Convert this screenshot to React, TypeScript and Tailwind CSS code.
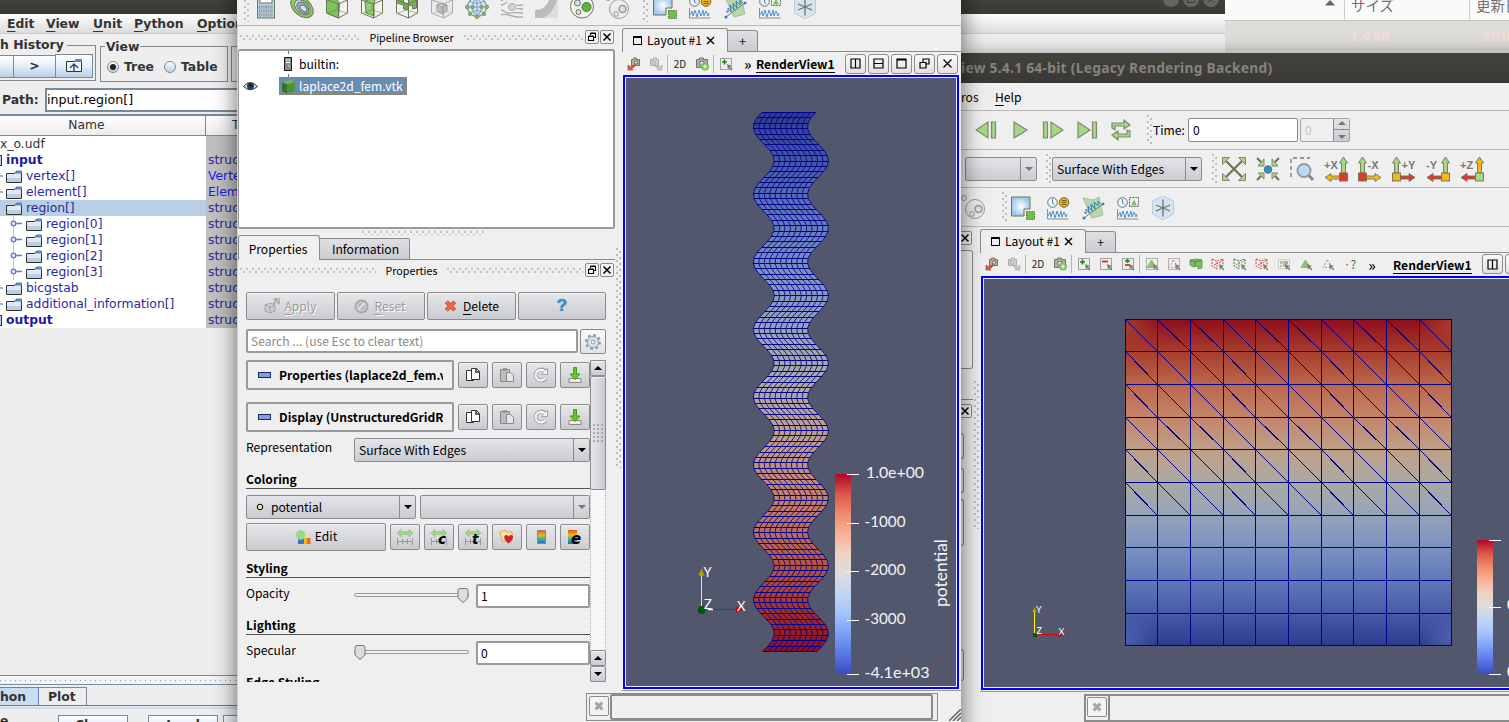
import React from "react";

type Kids = { children?: React.ReactNode };

const QT = "font-['Noto_Sans_CJK_JP',sans-serif]";
const JAVA = "font-['DejaVu_Sans',sans-serif]";
const G = "#a6d785";
const GL = "#80896f";

/* ---------- shared small pieces ---------- */

function DotsH({ className = "" }: { className?: string }) {
  return (
    <div
      className={`bg-[radial-gradient(circle_at_1px_1px,#c2c2c2_1px,transparent_1.3px),radial-gradient(circle_at_4px_4px,#c2c2c2_1px,transparent_1.3px)] bg-[length:6px_6px] ${className}`}
    />
  );
}

function DotsV({ className = "" }: { className?: string }) {
  return (
    <div
      className={`w-[5px] shrink-0 bg-[radial-gradient(circle_at_1px_1px,#bdbdbd_1px,transparent_1.3px),radial-gradient(circle_at_4px_4px,#bdbdbd_1px,transparent_1.3px)] bg-[length:6px_6px] ${className}`}
    />
  );
}

function Btn({ children, className = "" }: Kids & { className?: string }) {
  return (
    <div
      className={`flex shrink-0 items-center justify-center rounded-[2px] border border-[#8b8b8b] bg-linear-to-b from-[#e6e7ea] to-[#cacbd1] shadow-[inset_0_1px_0_#f2f2f4] ${className}`}
    >
      {children}
    </div>
  );
}

function DockBtn({ kind }: { kind: "float" | "close" }) {
  return (
    <div className="flex h-[14px] w-[14px] shrink-0 items-center justify-center rounded-[2px] border border-[#8b8b8b] bg-[#f3f3f3]">
      <svg width="10" height="10" viewBox="0 0 10 10" fill="none" stroke="#000">
        {kind === "close" ? (
          <path d="M1.5 1.5l7 7M8.500 1.500l-7 7" strokeWidth="1.5" />
        ) : (
          <path d="M3.500 3V1.500h5v4H7M1.500 4.500h5v4h-5zM1.500 4h5M3.500 1h5" strokeWidth="1.1" />
        )}
      </svg>
    </div>
  );
}

function DockTitle({ title }: { title: string }) {
  return (
    <div className="flex h-[22px] items-center pr-[1px] text-[10.700px] leading-none">
      <DotsH className="ml-[2px] h-[6px] flex-1" />
      <span className="px-[10px]">{title}</span>
      <DotsH className="mr-[2px] h-[6px] flex-1" />
      <div className="-mt-[2px] flex gap-px">
        <DockBtn kind="float" />
        <DockBtn kind="close" />
      </div>
    </div>
  );
}

function Combo({ children, className = "", off }: Kids & { className?: string; off?: boolean }) {
  return (
    <div
      className={`flex h-[24px] shrink-0 items-stretch rounded-[2px] border border-[#8b8b8b] bg-linear-to-b from-[#e4e5e9] to-[#cbccd2] text-[12.100px] leading-[21px] ${className}`}
    >
      <div className="flex-1 overflow-hidden pl-[4px] whitespace-nowrap">{children}</div>
      <div className="flex w-[16px] items-center justify-center border-l border-[#8b8b8b]">
        <svg width="8" height="4" viewBox="0 0 8 4">
          <path d="M0 0h8L4 4z" fill={off ? "#777" : "#000"} />
        </svg>
      </div>
    </div>
  );
}

/* ---------- main toolbar icons ---------- */

function Ico({ children, size = 24 }: Kids & { size?: number }) {
  return (
    <svg width={size} height={size} viewBox="0 0 24 24" fill="none" className="shrink-0">
      {children}
    </svg>
  );
}

function Cell({ children }: Kids) {
  return <div className="flex w-[35px] shrink-0 justify-center">{children}</div>;
}

const Calculator = () => (
  <Ico>
    <rect x="2.500" y="1" width="17" height="22" fill="#b9d3ea" stroke="#6e7458" />
    <rect x="5" y="3" width="12" height="5" fill="#fff" stroke="#6e7458" />
    {[11, 15, 19].map((y) =>
      [4.5, 8, 11.5, 15].map((x) => <rect key={`${x}${y}`} x={x} y={y} width="2" height="2" fill="#fff" stroke="#6e7a80" strokeWidth=".7" />)
    )}
  </Ico>
);
const Contour = () => (
  <Ico>
    <g transform="rotate(42 12 12)" stroke="#6e7458">
      <ellipse cx="12" cy="12" rx="13" ry="8.500" fill="#8cc96a" />
      <ellipse cx="12.500" cy="12" rx="9" ry="6" fill="#dfeee0" />
      <ellipse cx="13" cy="12" rx="7" ry="4.500" fill="#86add8" />
      <ellipse cx="14" cy="12" rx="4" ry="2.500" fill="#d2e4f3" />
    </g>
  </Ico>
);
const CubeIcon = ({ v }: { v: "clip" | "slice" | "thr" | "ext" }) => {
  const off = v === "ext";
  const line = off ? "#aaa" : "#6e7458";
  return (
    <Ico>
      <path d="M1.500 5l11-4 10 4v13l-9 5-12-5z" fill={off ? "#e9e9e9" : "#f1f4ee"} stroke={line} />
      {v === "clip" && <path d="M1.500 5l8-3 5 6-1 15-12-5z" fill="#7cc35c" stroke={line} />}
      {v === "slice" && <path d="M5 6l11-4-2 6v13l-8-3z" fill="#8fd06c" stroke={line} />}
      {v === "thr" && <path d="M1.500 5l7-2v5l5 1V4l8 1v8l-4 1v-4l-4 1v4l-5-1v-4l-7-2z" fill="#6fbb4d" stroke={line} />}
      {off && <path d="M7 10l5-2 5 2v6l-5 3-5-3zM12 12v7M7 10l5 2 5-2" fill="#c4c4c4" stroke="#999" />}
      <path d="M1.500 5l12 4 9-4M13.500 9v14" stroke={line} />
      <path d="M3 18l9-3 10 3M12 9v6" stroke={line} strokeWidth=".7" opacity=".7" />
    </Ico>
  );
};
const Glyph = () => (
  <Ico>
    <circle cx="12" cy="12" r="9.500" fill="#cfe4f4" stroke="#6e7458" />
    <path d="M2.500 12h19M12 2.500v19M5 6c4 3 10 3 14 0M5 18c4-3 10-3 14 0M12 2.500c-6 6-6 13 0 19M12 2.500c6 6 6 13 0 19" stroke="#6f8fae" strokeWidth=".8" />
    {[[12, 22], [2, 12], [22, 12], [5, 19], [19, 19], [7.5, 12], [16.5, 12]].map(([x, y]) => (
      <circle key={`${x}-${y}`} cx={x} cy={y} r="1.700" fill="#7cc35c" stroke="#6e7458" strokeWidth=".6" />
    ))}
  </Ico>
);
const Stream = () => (
  <Ico>
    <path d="M1 6c6-5 10 0 22-2M1 10c3 0 4-2 6-3M1 15c3 0 4 3 7 3s7-1 15 0M1 20c6-3 10 3 22 2M16 10c2 1 4 0 7 0M16 14c3-1 4 0 7 0" stroke="#aaa" strokeWidth="1.300" />
    <circle cx="12" cy="12" r="3.500" fill="#d5d5d5" stroke="#aaa" />
  </Ico>
);
const Warp = () => (
  <Ico>
    <path d="M0 15c8 0 13-4 15-14h8v22h-6L0 23z" fill="#dedede" />
    <path d="M0 15c8 0 13-4 15-14h8c-2 11-8 19-15 22H0z" fill="#bcbcbc" />
  </Ico>
);
const GroupIcon = () => (
  <Ico>
    <circle cx="12" cy="11.500" r="11.500" fill="#f3f3ee" stroke="#6e7458" />
    <circle cx="16.500" cy="12" r="4.500" fill="#5fb53c" stroke="#4a7a35" />
    <circle cx="7.500" cy="8" r="3" fill="#cfe1f1" stroke="#6e7458" />
    <circle cx="8.500" cy="17" r="2.500" fill="#cfe1f1" stroke="#6e7458" />
  </Ico>
);
const LevelIcon = () => (
  <Ico>
    <circle cx="14" cy="14" r="9.500" fill="#ececec" stroke="#999" />
    <circle cx="17.500" cy="14" r="3.500" fill="#e0e0e0" stroke="#999" strokeWidth="1.500" />
    <circle cx="11" cy="19" r="2.300" stroke="#999" />
    <circle cx="3" cy="3" r="2.500" stroke="#999" />
  </Ico>
);
const SelectBlock = () => (
  <Ico>
    <defs>
      <radialGradient id="selblk">
        <stop offset="0" stopColor="#fff" />
        <stop offset="1" stopColor="#9fc9ea" />
      </radialGradient>
    </defs>
    <path d="M.5 1h18.500v12h-6v7H.5z" fill="url(#selblk)" stroke="#6e7458" />
    <rect x="15.500" y="15.500" width="8" height="8" fill="#6cc04a" stroke="#4a7a35" strokeDasharray="1.500 1" />
  </Ico>
);
const waves = "M2 20l2-4 1 5 2-6 2 7 2-7 2 6 2-6 1 6 2-5 2 5 1-3";
const ClockPlot = ({ tri }: { tri?: boolean }) => (
  <Ico>
    <circle cx="6.500" cy="6.500" r="4.800" fill="#eef6fc" stroke="#6e7458" />
    <path d="M6.500 3v4l2 1.500" stroke="#3b7fb8" />
    {tri ? (
      <>
        <rect x="13.500" y="1.500" width="9" height="9" stroke="#666" strokeDasharray="2 1" />
        <path d="M18 3.500l3 6h-6z" fill="#7cc35c" />
      </>
    ) : (
      <>
        <circle cx="18" cy="6.500" r="4.800" fill="#f2b81a" stroke="#6e6438" />
        <path d="M15.500 4.500h5M15.500 6.500h5M15.500 8.500h5" stroke="#7a5a10" />
      </>
    )}
    <path d="M1.500 13v10h21" stroke="#8a8f80" />
    <path d={waves} stroke="#4b93d1" />
  </Ico>
);
const LinePlot = () => (
  <Ico>
    <path d="M2 2l10 2 6-3 4 18-11 3z" fill="#b7d8a8" stroke="#a6bf98" />
    <path d="M3 16l2 2 0-5 3 4-1-7 4 5-1-7 4 5-1-7 4 4 0-5 2 3" stroke="#2f7cc4" />
    <path d="M3 22L22 8" stroke="#777b60" />
    <circle cx="3" cy="22" r="1.500" fill="#2f7cc4" />
    <circle cx="22" cy="8" r="1.500" fill="#2f7cc4" />
  </Ico>
);
const ProbeCube = () => (
  <Ico>
    <path d="M12 0l10.500 5v13L12 24 1.500 18V5z" fill="#d6e4f0" stroke="#bccbd8" />
    <path d="M12 3.500v17M5 9l14 6M19 9L5 15" stroke="#6d7466" strokeWidth="1.300" />
  </Ico>
);

function SampleTools() {
  return (
    <>
      <Cell><SelectBlock /></Cell>
      <Cell><ClockPlot /></Cell>
      <Cell><LinePlot /></Cell>
      <Cell><ClockPlot tri /></Cell>
      <Cell><ProbeCube /></Cell>
    </>
  );
}

/* ---------- view toolbar ---------- */

function Mini({ children }: Kids) {
  return (
    <svg width="14" height="14" viewBox="0 0 14 14" fill="none" className="shrink-0">
      {children}
    </svg>
  );
}

const CameraUndo = ({ off }: { off?: boolean }) => (
  <Mini>
    <g transform={off ? "translate(14 0) scale(-1 1)" : undefined}>
      <path d="M4.500 2.500h2V1h3v1.500h3v6h-8z" fill={off ? "#d0d0d0" : "#b5b09a"} stroke={off ? "#aaa" : "#77755f"} />
      <circle cx="9" cy="5.500" r="1.700" fill="#ddd" stroke={off ? "#aaa" : "#666"} />
      <path d="M1 8v5h5l-1.500-1.500C7 11 8 9.500 8 7.500 6.500 9 5 9.300 3 9.500z" fill={off ? "#c9c9c9" : "#e05a48"} stroke={off ? "#aaa" : "#b0402f"} strokeWidth=".7" />
    </g>
  </Mini>
);
const CameraLink = () => (
  <Mini>
    <path d="M1.500 2.500h3V1h4v1.500h4v8h-11z" fill="#b4b39c" stroke="#77755f" />
    <circle cx="7" cy="6.500" r="2.500" fill="#dde" stroke="#666" />
    <circle cx="10" cy="9.500" r="4" fill="#7cc35c" />
    <path d="M8 9.500h4M10 7.500v4" stroke="#dff2d6" strokeWidth="1.500" />
  </Mini>
);
const Arrow = () => <path d="M8 7l5 2-2 1 2.500 2.500-1 1L10 11l-1 2z" fill="#7c8068" />;
const Pick = ({ op }: { op: "plus" | "minus" | "both" }) => (
  <Mini>
    <rect x="1.500" y="1.500" width="11" height="11" stroke="#555" strokeDasharray="1 1" />
    {op !== "minus" && <path d={op === "both" ? "M4 4h5M6.500 2v4" : "M3 5h5M5.500 2.500v5"} stroke="#178a17" strokeWidth="1.700" />}
    {op !== "plus" && <path d={op === "both" ? "M4 8h5" : "M3 4.500h6"} stroke="#e22" strokeWidth="1.800" />}
    <Arrow />
  </Mini>
);
const Tri = ({ box, dots }: { box?: boolean; dots?: boolean }) => (
  <Mini>
    {box && <rect x="1.500" y="1.500" width="11" height="11" stroke="#777" strokeDasharray="1 1" />}
    <path d="M6.500 3l4.500 7.500H2z" fill={dots ? "none" : "#8cc96a"} stroke={dots ? "#e55" : "#8cb974"} strokeDasharray={dots ? "1.500 2" : undefined} />
    <Arrow />
  </Mini>
);
const Frustum = ({ red, fill }: { red?: boolean; fill?: boolean }) => (
  <Mini>
    {fill ? (
      <>
        <path d="M1 3l6-1 6 1v8l-4 1V9l-5 1-3-2z" fill="#7fbf62" stroke="#5d8a4a" strokeWidth=".8" />
        <path d="M1 3l5 2 7-2M6 5v4" stroke="#4c7a44" strokeWidth=".8" />
      </>
    ) : (
      <>
        <path d="M1 2l5 2 6-2v6M1 2v7l5 3V4" stroke={red ? "#d44" : "#4c7a44"} strokeDasharray="2 1" />
        <path d="M3 8l4-2M12 3L8 6" stroke={red ? "#b43" : "#6a9a5a"} strokeDasharray="2 1" />
        <Arrow />
      </>
    )}
  </Mini>
);
const BlockPick = () => (
  <Mini>
    <rect x="1.500" y="2.500" width="11" height="9" stroke="#aaa" strokeDasharray="1 1" />
    <path d="M3 4h3v3H3zM6 7h3v3H6zM3 8h2v2H3z" fill="#a9c69a" />
    <path d="M6 4h5v3H7z" fill="#aaa" />
    <Arrow />
  </Mini>
);

function Sep() {
  return <div className="h-[18px] w-px shrink-0 bg-[#b4b4b4]" />;
}

function Slot({ children }: Kids) {
  return <div className="flex w-[22px] shrink-0 items-center justify-center">{children}</div>;
}

const TwoD = () => <span className="text-[10px] leading-none text-[#222]">2D</span>;

function ViewBtn({ d }: { d: string }) {
  return (
    <div className="flex h-[20px] w-[21px] shrink-0 items-center justify-center rounded-[3px] border border-[#8b8b8b] bg-linear-to-b from-[#fafafa] to-[#e2e2e4]">
      <svg width="11" height="11" viewBox="0 0 11 11" fill="none" stroke="#000" strokeWidth="1.200">
        <path d={d} />
      </svg>
    </div>
  );
}

function LayoutTabs() {
  return (
    <div className="flex h-[24px] items-end">
      <div className="flex h-[24px] w-[106px] shrink-0 items-center rounded-t-[3px] border border-b-0 border-[#8b8b8b] bg-[#efefef] pl-[10px] text-[12.100px] leading-none">
        <div className="mr-[5px] h-[9px] w-[9px] border border-t-2 border-black" />
        <span className="whitespace-nowrap">Layout #1</span>
        <svg width="9" height="9" viewBox="0 0 9 9" className="ml-[4px]" stroke="#000" strokeWidth="1.400">
          <path d="M1 1l7 7M8 1L1 8" />
        </svg>
      </div>
      <div className="flex h-[22px] w-[30px] shrink-0 items-center justify-center rounded-tr-[3px] border border-l-0 border-[#8b8b8b] bg-linear-to-b from-[#dfe0e4] to-[#cbccd2] text-[12px] leading-none">+</div>
      <div className="h-px flex-1 bg-[#8b8b8b]" />
    </div>
  );
}

/* ---------- rendered scenes ---------- */

const SURF = ["#8f0c1c", "#a83c2e", "#bb664c", "#c4846a", "#bf9f88", "#abaaa4", "#95a3b8", "#7b93c0", "#6079b9", "#475ba9", "#2e3b8e"];

function Stops({ colors }: { colors: string[] }) {
  return (
    <>
      {colors.map((c, i) => (
        <stop key={i} offset={i / (colors.length - 1)} stopColor={c} />
      ))}
    </>
  );
}

const BAR = ["#b40426", "#d95847", "#f08a6c", "#f7b396", "#ecd3c5", "#dddcdc", "#c0d4f5", "#a3c2fe", "#7b9ff9", "#5977e3", "#3b4cc0"];

function waveMesh() {
  const rows = 100;
  const y0 = 112.500;
  const dy = 5.390;
  const at = (r: number) => 763.8 - 10.500 * Math.sin((2 * Math.PI * (r + 0.450)) / 12.530);
  const w = 54.200;
  let across = "";
  let down = "";
  let left = "";
  let right = "";
  for (let r = 0; r <= rows; r++) {
    const y = y0 + r * dy;
    const x = at(r);
    across += `M${x.toFixed(1)} ${Math.floor(y) + 0.5}h${w}`;
    left += `${r ? "L" : "M"}${x.toFixed(1)} ${y.toFixed(1)}`;
    right = `L${(x + w).toFixed(1)} ${y.toFixed(1)}` + right;
  }
  for (let c = 0; c <= 10; c++) {
    for (let r = 0; r <= rows; r++) {
      down += `${r ? "L" : "M"}${(at(r) + (w * c) / 10).toFixed(1)} ${(y0 + r * dy).toFixed(1)}`;
    }
  }
  return { across, down, outline: left + right + "Z" };
}

const MESH = waveMesh();

function WaveScene() {
  const ticks: [number, string, number][] = [
    [474, "1.0e+00", 58],
    [523, "-1000", 41],
    [571, "-2000", 41],
    [620, "-3000", 41],
    [674, "-4.1e+03", 65],
  ];
  return (
    <svg width="330" height="608" viewBox="626 78 330 608" className="block font-['Lato',sans-serif]">
      <defs>
        <linearGradient id="wave" gradientUnits="userSpaceOnUse" x1="0" x2="0" y1="651" y2="112">
          <Stops colors={SURF} />
        </linearGradient>
        <linearGradient id="bar" x1="0" x2="0" y1="0" y2="1">
          <Stops colors={BAR} />
        </linearGradient>
      </defs>
      <path d={MESH.outline} fill="url(#wave)" />
      <path d={MESH.across} stroke="#00008b" fill="none" shapeRendering="crispEdges" />
      <path d={MESH.down} stroke="#00008b" strokeWidth=".85" fill="none" />
      <rect x="835" y="474" width="16" height="200" fill="url(#bar)" />
      {ticks.map(([y, label, w]) => (
        <g key={y}>
          <path d={`M847 ${y + 0.5}h12`} stroke="#fff" shapeRendering="crispEdges" />
          <text x={label === "1.0e+00" ? 866 : 864.500} y={y + 4} fontSize="16" fill="#f4f4f4" textLength={w} lengthAdjust="spacingAndGlyphs">
            {label}
          </text>
        </g>
      ))}
      <text transform="translate(947 607) rotate(-90)" fontSize="16.500" fill="#f4f4f4" textLength="68" lengthAdjust="spacingAndGlyphs">
        potential
      </text>
      <path d="M701.500 608V574" stroke="#ff0" />
      <path d="M701.500 568.500l3 7h-6z" fill="#b5a800" />
      <path d="M708 609.500h5" stroke="#fff" strokeWidth="1.500" />
      <path d="M713 609.500h24" stroke="#e00000" />
      <path d="M744 609.500l-8-3v6z" fill="#d00000" />
      <circle cx="701.700" cy="610" r="4" fill="#005a00" />
      <g fontSize="13" fill="#fff">
        <text x="703.500" y="576.500">Y</text>
        <text x="737" y="610.500">X</text>
        <text x="704" y="609">Z</text>
      </g>
    </svg>
  );
}

const GRID_AT = [0, 32, 65, 98, 130, 163, 196, 228, 261, 294, 326];

function gridMesh() {
  let d = "";
  let diag = "";
  GRID_AT.forEach((p) => {
    d += `M${p + 0.5} 0v327M0 ${p + 0.5}h327`;
  });
  for (let r = 0; r < 6; r++) {
    for (let c = 0; c < 10; c++) diag += `M${GRID_AT[c]} ${GRID_AT[r]}L${GRID_AT[c + 1]} ${GRID_AT[r + 1]}`;
  }
  return { d, diag };
}

const GRID = gridMesh();

function SquareScene() {
  return (
    <svg width="525" height="408" viewBox="984 279 525 408" className="block shrink-0 font-['Lato',sans-serif]">
      <defs>
        <linearGradient id="sq" x1="0" x2="0" y1="0" y2="1">
          <Stops colors={SURF} />
        </linearGradient>
        <radialGradient id="hot">
          <stop offset="0" stopColor="#a83c2e" />
          <stop offset="1" stopColor="#a83c2e" stopOpacity="0" />
        </radialGradient>
        <radialGradient id="cold">
          <stop offset="0" stopColor="#4a60ae" />
          <stop offset="1" stopColor="#4a60ae" stopOpacity="0" />
        </radialGradient>
        <clipPath id="sqclip">
          <rect width="326" height="326" />
        </clipPath>
      </defs>
      <g transform="translate(1125 319)">
        <rect width="326" height="326" fill="url(#sq)" />
        <g clipPath="url(#sqclip)">
          <circle cx="0" cy="8" r="34" fill="url(#hot)" />
          <circle cx="326" cy="8" r="34" fill="url(#hot)" />
          <circle cx="0" cy="318" r="34" fill="url(#cold)" />
          <circle cx="326" cy="318" r="34" fill="url(#cold)" />
        </g>
        <path d={GRID.d} stroke="#00008b" fill="none" shapeRendering="crispEdges" />
        <path d={GRID.diag} stroke="#00008b" fill="none" shapeRendering="crispEdges" />
      </g>
      <rect x="1477" y="540" width="16" height="134" fill="url(#bar)" />
      <path d="M1489 540.500h12M1489 607.500h12M1489 674.500h12" stroke="#fff" shapeRendering="crispEdges" />
      <text x="1507" y="610" fontSize="15.500" fill="#fff">0.5</text>
      <text x="1507" y="677" fontSize="15.500" fill="#fff">0.0</text>
      <path d="M1034.500 634V612" stroke="#ff0" />
      <path d="M1034.500 607l2 5h-4z" fill="#b5a800" />
      <path d="M1036 634.500h23" stroke="#e00000" />
      <path d="M1063 635l-5-2v4z" fill="#c00000" />
      <rect x="1033" y="633" width="4" height="4" fill="#005a00" />
      <g fontSize="9" fill="#fff">
        <text x="1036" y="613">Y</text>
        <text x="1058.500" y="635">X</text>
        <text x="1036.500" y="634">Z</text>
      </g>
    </svg>
  );
}

/* ---------- Java window ---------- */

function Mn({ t, className = "" }: { t: string; className?: string }) {
  return (
    <span className={`shrink-0 ${className}`}>
      <span className="underline underline-offset-[3px]">{t[0]}</span>
      {t.slice(1)}
    </span>
  );
}

function Folder() {
  return (
    <svg width="16" height="13" viewBox="0 0 16 13" className="shrink-0">
      <path d="M.5 3.500h8l1.500-2h5.500v11H.5z" fill="#dfeaf5" stroke="#333" />
      <path d="M1 8h14v4H1z" fill="#b8cfe5" />
      <path d="M9 3.500l1.500-3H16v3z" fill="#6382bf" />
    </svg>
  );
}

function Knob() {
  return (
    <svg width="12" height="16" viewBox="0 0 12 16" className="shrink-0" fill="none" stroke="#6382bf">
      <path d="M3.500 0v5.500M3.500 10v6" stroke="#b8cfe5" />
      <circle cx="3.500" cy="7.500" r="2.200" strokeWidth="1.500" />
      <path d="M5.500 7.500H12" strokeWidth="1.500" />
    </svg>
  );
}

const TREE: { t: string; lv: number; ty?: string; sel?: boolean }[] = [
  { t: "x_o.udf", lv: 0 },
  { t: "input", lv: 1, ty: "struct" },
  { t: "vertex[]", lv: 2, ty: "Vertex" },
  { t: "element[]", lv: 2, ty: "Element" },
  { t: "region[]", lv: 2, ty: "struct", sel: true },
  { t: "region[0]", lv: 3, ty: "struct" },
  { t: "region[1]", lv: 3, ty: "struct" },
  { t: "region[2]", lv: 3, ty: "struct" },
  { t: "region[3]", lv: 3, ty: "struct" },
  { t: "bicgstab", lv: 2, ty: "struct" },
  { t: "additional_information[]", lv: 2, ty: "struct" },
  { t: "output", lv: 1, ty: "struct" },
];

function TreeRow({ n }: { n: (typeof TREE)[number] }) {
  return (
    <div className="flex h-[16px] shrink-0 text-[12.350px] leading-[16px] text-[#2a2a9e]">
      <div className={`flex w-[206px] items-center overflow-hidden whitespace-nowrap ${n.sel ? "bg-[#b8cfe5]" : "bg-white"}`}>
        {n.lv === 0 && <span className="text-[#333]">{n.t}</span>}
        {n.lv === 1 && (
          <>
            <div className="mr-[4px] h-[11px] w-[2px] border-y border-r border-[#333] bg-[#b8cfe5]" />
            <span className="font-bold text-[#1c1ca0]">{n.t}</span>
          </>
        )}
        {n.lv === 2 && (
          <>
            <div className={`mr-[3px] h-[2px] w-[3px] ${n.sel ? "" : "bg-[#9db6dc]"}`} />
            <Folder />
            <span className="ml-[4px]">{n.t}</span>
          </>
        )}
        {n.lv === 3 && (
          <>
            <div className="mr-[3px] ml-[10px]">
              <Knob />
            </div>
            <div className="ml-px flex items-center">
              <Folder />
              <span className="ml-[4px]">{n.t}</span>
            </div>
          </>
        )}
      </div>
      <div className={`w-[32px] overflow-hidden bg-[#c0c0c0] pl-[2px] ${n.ty && n.ty !== "struct" ? "text-[#1a1aff]" : ""}`}>{n.ty}</div>
    </div>
  );
}

function JBtn({ children, className = "" }: Kids & { className?: string }) {
  return (
    <div className={`flex items-center justify-center border border-[#7a8a99] bg-linear-to-b from-white via-[#e4eef8] to-[#b8cfe5] ${className}`}>{children}</div>
  );
}

function Radio({ on, label }: { on?: boolean; label: string }) {
  return (
    <div className="flex items-center gap-[5px]">
      <div className="flex h-[12px] w-[12px] items-center justify-center rounded-full border border-[#7a8a99] bg-linear-to-b from-white to-[#b8cfe5]">
        {on && <div className="h-[6px] w-[6px] rounded-full bg-[#222]" />}
      </div>
      <span>{label}</span>
    </div>
  );
}

function JavaWindow() {
  return (
    <div className={`absolute top-0 left-0 flex h-[722px] w-[1225px] flex-col bg-[#eee] text-[12.400px] font-bold text-[#333] ${JAVA}`}>
      <div className="flex h-[14px] shrink-0 items-start justify-end bg-linear-to-b from-[#403f3a] to-[#3b3a36] pr-[6px]">
        <svg width="56" height="8" viewBox="0 0 56 8">
          <g fill="#66655f">
            <circle cx="8" cy="-1" r="8" />
            <circle cx="28" cy="-1" r="8" />
            <circle cx="48" cy="-1" r="8" />
          </g>
          <path d="M24.500 0v2.500h7V0M45 2.500L48-.5l3 3" stroke="#3a3935" fill="none" />
        </svg>
      </div>
      <div className="flex h-[20px] shrink-0 items-center border-b border-[#ccc] bg-linear-to-b from-white to-[#dcdcdc] pl-[7px] leading-[18px]">
        <Mn t="Edit" className="w-[39px]" />
        <Mn t="View" className="w-[47px]" />
        <Mn t="Unit" className="w-[41px]" />
        <Mn t="Python" className="w-[63px]" />
        <Mn t="Options" />
      </div>
      <div className="flex h-[52px] w-[260px] shrink-0 items-start overflow-hidden pt-[4px]">
        <div className="flex w-[96px] shrink-0 flex-col">
          <div className="flex h-[14px] items-center leading-none">
            <span className="whitespace-nowrap">h History</span>
            <div className="ml-[3px] h-px flex-1 bg-[#888]" />
          </div>
          <div className="-mt-[7px] flex h-[36px] items-start border-r border-b border-[#888] pt-[9px]">
            <JBtn className="mt-px h-[23px] w-[14px] border-l-0" />
            <JBtn className="mt-px -ml-px h-[23px] w-[43px]">&gt;</JBtn>
            <JBtn className="-ml-px h-[24px] w-[38px]">
              <svg width="16" height="14" viewBox="0 0 16 14" fill="none">
                <path d="M.5 2.500h8l1.500-2h5.500v12H.5z" fill="#eef4fa" stroke="#333" />
                <path d="M9 3l1.500-3H16v3z" fill="#6382bf" />
                <path d="M4 9l4-4 4 4M8 5v8" stroke="#2a4a7a" strokeWidth="1.500" />
              </svg>
            </JBtn>
          </div>
        </div>
        <fieldset className="ml-[4px] h-[44px] w-[128px] shrink-0 border border-[#888] pl-[6px]">
          <legend className="ml-[-2px] px-px leading-[17px]">View</legend>
          <div className="flex gap-[10px] pt-[4px] leading-[16px]">
            <Radio on label="Tree" />
            <Radio label="Table" />
          </div>
        </fieldset>
        <div className="mt-[8px] ml-[3px] h-[36px] w-[30px] shrink-0 border border-[#888]" />
      </div>
      <div className="flex h-[28px] shrink-0 items-center pl-[2px]">
        <span className="w-[43px]">Path:</span>
        <div className="h-[24px] w-[220px] border-2 border-[#7a8a99] bg-white text-[12.600px] leading-[19px] font-normal text-black">input.region[]</div>
      </div>
      <div className="flex h-[22px] w-[238px] shrink-0 overflow-hidden border-t-2 border-b border-[#7a8a99] bg-linear-to-b from-white to-[#ececec] text-[12.300px] leading-[19px] font-normal">
        <div className="w-[206px] shrink-0 border-r border-[#7a8a99] pr-[32px] text-center">Name</div>
        <div className="shrink-0 pl-[26px]">Type</div>
      </div>
      <div className="-mt-px flex flex-col pt-px font-normal">
        {TREE.map((n) => (
          <TreeRow key={n.t} n={n} />
        ))}
      </div>
      <div className="flex-1" />
      <div className="flex h-[10px] w-[260px] shrink-0 flex-col justify-center border-y border-[#7a8a99] bg-[#f4f4f4]">
        <div className="h-px bg-[repeating-linear-gradient(90deg,#8a9aa8_0_1px,transparent_1px_5px)]" />
      </div>
      <div className="mt-[2px] flex h-[19px] w-[260px] shrink-0 items-stretch border-b border-[#5577bb] leading-[17px]">
        <div className="w-[39px] border-t border-r border-[#6382bf] bg-[#c8ddf2]">hon</div>
        <div className="w-[48px] border-t border-r border-[#7a8a99] pl-[9px]">Plot</div>
      </div>
      <div className="mt-px h-[2px] w-[260px] shrink-0 bg-[#c8ddf2]" />
      <div className="mt-[6px] flex h-[7px] w-[260px] shrink-0 overflow-hidden leading-[18px]">
        <span className="w-[58px] shrink-0 -translate-y-[3px]">e</span>
        <JBtn className="h-[20px] w-[70px] shrink-0">Clear</JBtn>
        <JBtn className="ml-[20px] h-[20px] w-[70px] shrink-0">Load</JBtn>
        <JBtn className="ml-[5px] h-[20px] w-[70px] shrink-0" />
      </div>
    </div>
  );
}

/* ---------- file manager ---------- */

function FileManager() {
  return (
    <div className="absolute top-0 left-[1225px] flex h-[53px] w-[284px] flex-col overflow-hidden bg-[#e6e4e1] font-['Noto_Sans_CJK_JP',sans-serif] text-[14.500px]">
      <div className="flex h-[21px] shrink-0 items-stretch border-b border-[#c9c7c3] bg-[#fafafa] leading-[9px] text-[#707070]">
        <div className="flex w-[120px] shrink-0 justify-end border-r border-[#d0cfcc] pr-[9px]">
          <svg width="10" height="6" viewBox="0 0 10 6">
            <path d="M5 0l5 5.500H0z" fill="#666" />
          </svg>
        </div>
        <div className="w-[125px] shrink-0 border-r border-[#d0cfcc] pl-[6px]">サイズ</div>
        <div className="shrink-0 pl-[6px] whitespace-nowrap">更新日</div>
      </div>
      <div className="flex h-[29px] shrink-0 border-b border-[#d2d0cd] bg-[#dedcd9] text-[13.300px] leading-[30px] font-medium text-[#f5dfd6]">
        <div className="w-[126px] shrink-0" />
        <div className="w-[133px] shrink-0">1.4 kB</div>
        <div>2018</div>
      </div>
    </div>
  );
}

/* ---------- right ParaView window ---------- */

function Play({ v }: { v: "prev" | "play" | "next" | "last" | "loop" }) {
  const d = {
    prev: "M13 3v16L1 11zM16.500 3h4v16h-4z",
    play: "M5 3v16l13-8z",
    next: "M1.500 3h4v16h-4zM9 3v16l12-8z",
    last: "M2 3v16l12-8zM16.500 3h4v16h-4z",
    loop: "M2 9V4h12V1l6 5-6 4V7H5v4zM20 12v6H8v3l-6-5 6-4v3h9v-4z",
  }[v];
  return (
    <svg width="22" height="22" viewBox="0 0 22 22" className="shrink-0">
      <path d={d} fill={G} stroke={GL} strokeWidth="1.200" />
    </svg>
  );
}

function AxisIcon({ t, flip, up, side, box }: { t: string; flip?: boolean; up: string; side: string; box: string }) {
  return (
    <svg width="26" height="26" viewBox="0 0 26 26" className="shrink-0">
      <g transform={flip ? "translate(26 0) scale(-1 1)" : undefined} stroke="#6e7458" strokeWidth=".9">
        <path d="M3.500 17V7H1.500l4-6 4 6H7.500v10z" fill={up} />
        <path d="M9 20h9v-2.500l6 4-6 4V23H9z" fill={side} />
        <rect x="1.500" y="17" width="8" height="8" fill={box} />
      </g>
      <text x={flip ? 1 : 10.500} y="12.500" fontSize="11" fontWeight="bold" fill="#777" fontFamily="Liberation Sans">
        {t}
      </text>
    </svg>
  );
}

const ResetCam = () => (
  <Ico>
    <path d="M4 4l16 16M20 4L4 20" stroke="#6e7458" strokeWidth="2.200" />
    {["M.5.5h7l-7 7z", "M23.500.5h-7l7 7z", "M.5 23.500h7l-7-7z", "M23.500 23.500h-7l7-7z"].map((d) => (
      <path key={d} d={d} fill={G} stroke={GL} />
    ))}
  </Ico>
);
const ZoomData = () => (
  <Ico>
    <path d="M1 1l5 5M23 1l-5 5M1 23l5-5M23 23l-5-5" stroke="#6e7458" strokeWidth="2" />
    {["M8 2v7H2z", "M16 2v7h6z", "M8 22v-6H2z", "M16 22v-6h6z"].map((d) => (
      <path key={d} d={d} fill={G} stroke={GL} />
    ))}
    <circle cx="12" cy="12.500" r="3.800" fill="#2f8fd6" stroke="#55748c" />
  </Ico>
);
const ZoomBox = () => (
  <Ico>
    <path d="M1 20V1h19" stroke="#777" strokeDasharray="4 3" strokeWidth="1.300" />
    <circle cx="14" cy="13.500" r="6.500" fill="#b9dcf5" stroke="#999" strokeWidth="2" />
    <path d="M18.500 18l4.500 5" stroke="#8a8a8a" strokeWidth="3" />
  </Ico>
);

function ParaRight() {
  return (
    <div className={`absolute top-[53px] left-[961px] flex h-[669px] w-[548px] flex-col overflow-hidden bg-[#efefef] text-[12.100px] text-black ${QT}`}>
      <div className="h-[30px] shrink-0 bg-linear-to-b from-[#42413c] to-[#3a3935] font-['Noto_Sans',sans-serif] text-[13.800px] leading-[30px] font-bold tracking-[0.27px] whitespace-nowrap text-[#85837b]">
        iew 5.4.1 64-bit (Legacy Rendering Backend)
      </div>
      <div className="flex h-[28px] shrink-0 items-center border-b border-[#b9b9b9] pt-[2px] leading-none">
        <span className="w-[34px]">ros</span>
        <Mn t="Help" />
      </div>
      <div className="flex h-[39px] shrink-0 items-center border-b border-[#b9b9b9]">
        <div className="ml-[14px] flex w-[173px] shrink-0 items-center">
          <div className="w-[34px]"><Play v="prev" /></div>
          <div className="w-[33px]"><Play v="play" /></div>
          <div className="w-[34px]"><Play v="next" /></div>
          <div className="w-[34px]"><Play v="last" /></div>
          <Play v="loop" />
        </div>
        <DotsV className="-ml-px h-[30px]" />
        <span className="ml-px w-[35px] leading-none">Time:</span>
        <div className="h-[24px] w-[110px] rounded-[2px] border border-[#8b8b8b] bg-white pl-[4px] leading-[21px]">0</div>
        <div className="ml-[2px] flex h-[24px] w-[50px] rounded-[2px] border border-[#a5a5a5] text-[#c4c4c4]">
          <span className="flex-1 pl-[4px] leading-[22px]">0</span>
          <div className="flex w-[16px] flex-col items-center justify-around border-l border-[#8b8b8b] bg-linear-to-b from-[#e4e5e9] to-[#cbccd2]">
            <svg width="8" height="4"><path d="M0 4h8L4 0z" fill="#777" /></svg>
            <div className="h-px w-full bg-[#8b8b8b]" />
            <svg width="8" height="4"><path d="M0 0h8L4 4z" fill="#777" /></svg>
          </div>
        </div>
      </div>
      <div className="flex h-[38px] shrink-0 items-center border-b border-[#b9b9b9]">
        <Combo className="ml-[4px] w-[72px]" off />
        <DotsV className="ml-[9px] h-[30px]" />
        <Combo className="ml-px w-[150px]">Surface With Edges</Combo>
        <DotsV className="ml-[10px] h-[30px]" />
        <div className="ml-[5px] flex gap-[10px]">
          <ResetCam />
          <ZoomData />
          <ZoomBox />
        </div>
        <div className="ml-[9px] flex gap-[8px]">
          <AxisIcon t="+X" flip up={G} side="#f2b81a" box="#df3a2a" />
          <AxisIcon t="-X" up={G} side="#f2b81a" box="#df3a2a" />
          <AxisIcon t="+Y" up={G} side="#df3a2a" box="#f2b81a" />
          <AxisIcon t="-Y" flip up={G} side="#df3a2a" box="#f2b81a" />
          <AxisIcon t="+Z" flip up="#f2b81a" side="#df3a2a" box={G} />
        </div>
      </div>
      <div className="flex h-[39px] shrink-0 items-center border-b border-[#b9b9b9]">
        <div className="w-[41px]"><LevelIcon /></div>
        <DotsV className="h-[30px]" />
        <div className="-ml-[2px] flex pt-px"><SampleTools /></div>
      </div>
      <div className="flex min-h-0 flex-1">
        <div className="flex w-[12px] shrink-0 flex-col overflow-hidden pt-[4px]">
          <div className="flex h-[16px] justify-end pr-[1px]"><DockBtn kind="close" /></div>
          <div className="mt-[3px] h-[119px] shrink-0 rounded-r-[3px] border border-l-0 border-[#8b8b8b] bg-[#f7f7f7]" />
          <div className="mt-[30px] h-px shrink-0 bg-[#8b8b8b]" />
          <div className="mt-[4px] flex h-[14px] shrink-0 justify-end pr-[1px]"><DockBtn kind="close" /></div>
          <div className="mt-[15px] h-[26px] w-[3px] shrink-0 rounded-r-[3px] border border-l-0 border-[#8b8b8b]" />
          <div className="mt-[9px] h-[25px] w-[3px] shrink-0 rounded-r-[3px] border border-l-0 border-[#8b8b8b]" />
          <div className="mt-[6px] h-[47px] w-[3px] shrink-0 rounded-r-[3px] border border-l-0 border-[#8b8b8b]" />
          <div className="mt-[103px] h-[32px] w-[3px] shrink-0 rounded-r-[3px] border border-l-0 border-[#8b8b8b]" />
        </div>
        <DotsV className="mt-[154px] ml-[1px] h-[148px]" />
        <div className="ml-px flex w-[530px] shrink-0 flex-col pt-[2px]">
          <LayoutTabs />
          <div className="flex h-[22px] shrink-0 items-center pl-[1px]">
            <Slot><CameraUndo /></Slot>
            <Slot><CameraUndo off /></Slot>
            <Sep />
            <div className="ml-px flex"><Slot><TwoD /></Slot><Slot><CameraLink /></Slot></div>
            <Sep />
            <div className="ml-px flex"><Slot><Pick op="plus" /></Slot><Slot><Pick op="minus" /></Slot><Slot><Pick op="both" /></Slot></div>
            <Sep />
            <div className="ml-px flex">
              <Slot><Tri box /></Slot>
              <Slot><Tri box dots /></Slot>
              <Slot><Frustum fill /></Slot>
              <Slot><Frustum red /></Slot>
              <Slot><Frustum /></Slot>
              <Slot><Frustum red /></Slot>
              <Slot><BlockPick /></Slot>
              <Slot><Tri /></Slot>
              <Slot><Tri dots /></Slot>
              <Slot><span className="text-[12px] leading-none text-[#557045]"><span className="text-[#d33]">·</span>?</span></Slot>
              <Slot><span className="text-[15px] leading-none font-medium">»</span></Slot>
            </div>
            <span className="ml-[10px] w-[89px] shrink-0 leading-[15px] font-bold"><span className="border-b border-black">RenderView1</span></span>
            <div className="flex gap-[2px]">
              <ViewBtn d="M1 1h9v9H1zM5.500 1v9" />
              <ViewBtn d="M1 1h9v9H1zM1 5.500h9" />
            </div>
          </div>
          <div className="mt-px ml-px h-[414px] shrink-0 border-2 border-r-0 border-[#0000ff]">
            <div className="h-[410px] border border-r-0 border-[#e8e8ff] bg-[#52576e]">
              <SquareScene />
            </div>
          </div>
          <div className="mt-px h-px shrink-0 bg-[#9a9a9a]" />
          <div className="mt-[2px] ml-[104px] flex h-[28px] shrink-0 border-2 border-r-0 border-[#8b8b8b]">
            <StopBtn />
            <div className="flex-1 border-l-2 border-[#8b8b8b]" />
          </div>
        </div>
      </div>
    </div>
  );
}

function StopBtn() {
  return (
    <div className="m-px flex h-[20px] w-[20px] items-center justify-center rounded-[2px] border border-[#8b8b8b] bg-[#f3f3f3]">
      <svg width="10" height="10" viewBox="0 0 12 12" stroke="#a5a5a5" strokeWidth="3.600">
        <path d="M2 2l8 8M10 2l-8 8" />
      </svg>
    </div>
  );
}

/* ---------- front ParaView window ---------- */

const PageIco = ({ v }: { v: "copy" | "paste" | "reload" | "save" }) => (
  <svg width="18" height="18" viewBox="0 0 18 18" fill="none">
    {v === "copy" && (
      <>
        <path d="M2.500 4.500h5l2 2v8h-7z" fill="#fff" stroke="#333" />
        <path d="M7.500 2.500h5l3 3v8h-8z" fill="#fff" stroke="#333" />
        <path d="M12 2.500v3.500h3.500" stroke="#333" strokeWidth="1.500" />
      </>
    )}
    {v === "paste" && (
      <>
        <path d="M2.500 3.500h9v12h-9z" fill="#bdbdbd" stroke="#888" />
        <path d="M5 2h4v3H5z" fill="#999" />
        <path d="M8.500 6.500h4l3 3v6h-7z" fill="#e8e8e8" stroke="#888" />
      </>
    )}
    {v === "reload" && (
      <>
        <path d="M13.500 12.500A5.500 5.500 0 1 1 13 5" stroke="#a2a2a2" strokeWidth="4" />
        <path d="M15.500 2v6.500H9.500z" fill="#f6f6f6" stroke="#a2a2a2" />
        <path d="M13.300 12.200A5.300 5.300 0 1 1 12.800 5.500" stroke="#f6f6f6" strokeWidth="2.200" />
      </>
    )}
    {v === "save" && (
      <>
        <path d="M3 12.500h12v4H3z" fill="#eee" stroke="#888" />
        <path d="M7.500 1.500h3V8h3.500L9 13.500 4 8h3.500z" fill="#62c822" stroke="#4a9a1c" />
      </>
    )}
  </svg>
);

function GroupRow({ t }: { t: string }) {
  return (
    <div className="flex h-[30px] shrink-0 items-center gap-[4px]">
      <div className="flex h-[30px] w-[208px] shrink-0 items-center rounded-[2px] border-2 border-[#9a9a9a] pl-[10px] leading-none">
        <div className="mr-[8px] h-[6px] w-[13px] shrink-0 border border-[#1c2a66] bg-[#84a0e0]" />
        <div className="w-[164px] shrink-0 overflow-hidden py-1 text-[12.100px] font-bold whitespace-nowrap">{t}</div>
      </div>
      {(["copy", "paste", "reload", "save"] as const).map((v) => (
        <Btn key={v} className="h-[26px] w-[30px]">
          <PageIco v={v} />
        </Btn>
      ))}
    </div>
  );
}

function Heading({ children, className = "" }: Kids & { className?: string }) {
  return <div className={`h-[18px] w-[344px] shrink-0 border-b border-[#555] leading-[15px] font-bold ${className}`}>{children}</div>;
}

function SliderRow({ label, at, value, className = "" }: { label: string; at: "l" | "r"; value: string; className?: string }) {
  return (
    <div className={`flex h-[24px] shrink-0 items-center ${className}`}>
      <span className="w-[108px] -translate-y-[3px]">{label}</span>
      <div className={`flex h-[4px] w-[115px] -translate-y-px items-center rounded-full border border-[#999] bg-[#f2f2f2] ${at === "r" ? "justify-end" : ""}`}>
        <svg width="12" height="15" viewBox="0 0 12 15" className={`shrink-0 ${at === "l" ? "-ml-px" : "-mr-px"}`}>
          <path d="M1 2.500Q1 .5 3 .5h6Q11 .5 11 2.500V10L6 14.500 1 10z" fill="#dcdde0" stroke="#777" />
        </svg>
      </div>
      <div className="ml-[7px] h-[24px] w-[114px] rounded-[2px] border-2 border-[#9a9a9a] bg-white pl-[3px] leading-[19px]">{value}</div>
    </div>
  );
}

const Range = ({ t }: { t?: string }) => (
  <svg width="18" height="18" viewBox="0 0 18 18" fill="none">
    <path d="M1 5l4-4v2.500h8V1l4 4-4 4V6.500H5V9z" fill="#a0d585" stroke="#9ab88a" strokeWidth=".6" />
    <path d="M1.500 10v7M16.500 10v7M1.500 13.500h15M6.500 11v5M11.500 11v5" stroke="#999" />
    {t && <text x="8" y="15.500" fontSize="13.500" fontWeight="bold" fontStyle="italic" fill="#000" fontFamily="DejaVu Sans">{t}</text>}
  </svg>
);
const rainbow = (
  <linearGradient id="rb" x1="0" x2="0" y1="0" y2="1">
    <stop offset="0" stopColor="#e8551c" />
    <stop offset=".35" stopColor="#f5b31c" />
    <stop offset=".6" stopColor="#4db89a" />
    <stop offset="1" stopColor="#2563c9" />
  </linearGradient>
);

function Scrollbar() {
  return (
    <div className="flex h-[322px] w-[16px] shrink-0 flex-col border-x border-dotted border-[#aaa] bg-[#f6f6f6]">
      <Btn className="-mx-px h-[16px]"><svg width="8" height="4"><path d="M0 4h8L4 0z" /></svg></Btn>
      <Btn className="-mx-px h-[114px] bg-linear-to-r">
        <div className="h-[18px] w-[10px] bg-[radial-gradient(circle_at_1px_1px,#aaa_1px,transparent_1.2px)] bg-[length:4px_4px]" />
      </Btn>
      <div className="flex-1" />
      <Btn className="-mx-px h-[16px]"><svg width="8" height="4"><path d="M0 4h8L4 0z" /></svg></Btn>
      <Btn className="-mx-px h-[16px]"><svg width="8" height="4"><path d="M0 0h8L4 4z" /></svg></Btn>
    </div>
  );
}

function PropertiesPanel() {
  const off = "text-[#9b9b9b] [text-shadow:1px_1px_0_#fff]";
  return (
    <div className="flex flex-col pl-[8px]">
      <div className="mt-[10px] flex h-[28px] gap-[2px]">
        <Btn className={`w-[89px] gap-[4px] ${off}`}>
          <svg width="16" height="16" viewBox="0 0 16 16" fill="#ccc" stroke="#999">
            <path d="M1 7l5-2 5 2v6l-5 2-5-2zM1 7l5 2 5-2M6 9v6M9 5l4-3h-3V.7h5.300V6H14V3l-4 3z" strokeWidth=".8" />
          </svg>
          <Mn t="Apply" />
        </Btn>
        <Btn className={`w-[88px] gap-[5px] pr-[2px] ${off}`}>
          <svg width="15" height="15" viewBox="0 0 15 15"><circle cx="7.500" cy="7.500" r="7" fill="#a8a8a8" /><circle cx="7.500" cy="7.500" r="4.500" fill="#bbb" stroke="#ddd" /><path d="M4 11l7-7" stroke="#ddd" strokeWidth="2" /></svg>
          <Mn t="Reset" />
        </Btn>
        <Btn className="w-[89px] gap-[6px]">
          <svg width="13" height="14" viewBox="0 0 14 14"><path d="M2.500 2.500l9 9M11.500 2.500l-9 9" stroke="#c63a22" strokeWidth="4.400" /><path d="M2.500 2.500l9 9M11.500 2.500l-9 9" stroke="#f0684a" strokeWidth="3" /></svg>
          <Mn t="Delete" />
        </Btn>
        <Btn className="w-[88px] font-['Liberation_Sans',sans-serif] text-[17px] font-bold text-[#2b93d6] [text-shadow:0_0_1px_#1a5f96]">?</Btn>
      </div>
      <div className="mt-[9px] flex h-[25px] gap-[2px]">
        <div className="h-[24px] w-[332px] rounded-[2px] border-2 border-[#9a9a9a] bg-white pl-[3px] leading-[19px] text-[#8a8a8a]">Search ... (use Esc to clear text)</div>
        <Btn className="h-[25px] w-[26px] from-[#fafafa] to-[#e2e2e4]">
          <svg width="18" height="18" viewBox="0 0 18 18" fill="none">
            <circle cx="9" cy="9" r="7" stroke="#8d9aa5" strokeWidth="2" strokeDasharray="2.750 2.750" />
            <circle cx="9" cy="9" r="5.500" fill="#dfe7ee" stroke="#8d9aa5" />
            <circle cx="9" cy="9" r="2" fill="#f2f2f2" stroke="#8d9aa5" />
          </svg>
        </Btn>
      </div>
      <div className="mt-[6px] flex h-[322px] overflow-hidden">
        <div className="flex h-[322px] w-[344px] shrink-0 flex-col overflow-hidden">
          <GroupRow t="Properties (laplace2d_fem.vtk)" />
          <div className="mt-[12px] flex shrink-0 flex-col"><GroupRow t="Display (UnstructuredGridRepresentation)" /></div>
          <div className="mt-[6px] flex h-[24px] shrink-0">
            <span className="w-[108px] leading-[18px]">Representation</span>
            <Combo className="w-[236px]">Surface With Edges</Combo>
          </div>
          <Heading className="mt-[9px]">Coloring</Heading>
          <div className="mt-[6px] flex shrink-0 gap-[4px]">
            <Combo className="w-[170px]">
              <span className="flex items-center">
                <svg width="8" height="8" viewBox="0 0 8 8" className="mr-[7px] ml-[5px]"><circle cx="4" cy="4" r="2.800" fill="#f6d9a8" stroke="#000" /></svg>
                potential
              </span>
            </Combo>
            <Combo className="w-[170px]" off />
          </div>
          <div className="mt-[4px] flex h-[28px] shrink-0 items-center gap-[4px]">
            <Btn className="h-[28px] w-[140px] gap-[4px]">
              <svg width="16" height="15" viewBox="0 0 16 15">
                <path d="M3 8h6v6H3z" fill="#3d74c4" /><path d="M9 8h4v6H9z" fill="#f2b81a" /><path d="M12 8h3.500v6H12z" fill="#ea6a20" />
                <circle cx="5.500" cy="5" r="4.800" fill="#9bd98a" />
              </svg>
              <span className="-mt-px">Edit</span>
            </Btn>
            <Btn className="h-[26px] w-[30px]"><Range /></Btn>
            <Btn className="h-[26px] w-[30px]"><Range t="c" /></Btn>
            <Btn className="h-[26px] w-[30px]"><Range t="t" /></Btn>
            <Btn className="h-[26px] w-[30px]">
              <svg width="16" height="16" viewBox="0 0 16 16">
                <path d="M1 3l5-2 1 2h6v9H3z" fill="#fbe3a0" stroke="#d9ad4a" />
                <path d="M9.500 14.500C4 10.500 4.500 6 7.300 6q1.700 0 2.200 1.700Q10 6 12 6C15 6 15 10.500 9.500 14.500z" fill="#d81e2c" />
              </svg>
            </Btn>
            <Btn className="h-[26px] w-[30px] from-[#c6c7cc] to-[#d2d3d8]">
              <svg width="9" height="14" viewBox="0 0 9 14"><defs>{rainbow}</defs><rect x=".5" y=".5" width="8" height="13" fill="url(#rb)" stroke="#888" /></svg>
            </Btn>
            <Btn className="h-[26px] w-[30px]">
              <svg width="16" height="16" viewBox="0 0 16 16"><rect x="1" y="1" width="9" height="14" fill="url(#rb)" /><text x="4" y="15" fontSize="15" fontWeight="bold" fontStyle="italic" fontFamily="DejaVu Sans">e</text></svg>
            </Btn>
          </div>
          <Heading className="mt-[9px]">Styling</Heading>
          <SliderRow className="mt-[6px]" label="Opacity" at="r" value="1" />
          <Heading className="mt-[9px]">Lighting</Heading>
          <SliderRow className="mt-[6px]" label="Specular" at="l" value="0" />
          <Heading className="mt-[9px]">Edge Styling</Heading>
        </div>
        <Scrollbar />
      </div>
    </div>
  );
}

function ParaFront() {
  return (
    <div className={`absolute top-0 left-[237px] flex h-[722px] w-[724px] flex-col overflow-hidden bg-[#efefef] text-[12.100px] text-black ${QT}`}>
      <div className="flex h-[26px] shrink-0 items-start overflow-hidden border-b border-[#b9b9b9]">
        <DotsV className="ml-[7px] h-[22px]" />
        <div className="-mt-[5px] flex w-[385px] shrink-0">
          {[<Calculator />, <Contour />, <CubeIcon v="clip" />, <CubeIcon v="slice" />, <CubeIcon v="thr" />, <CubeIcon v="ext" />, <Glyph />, <Stream />, <Warp />, <GroupIcon />, <LevelIcon />].map((e, i) => (
            <Cell key={i}>{e}</Cell>
          ))}
        </div>
        <DotsV className="ml-[9px] h-[22px]" />
        <div className="-mt-[5px] -ml-px flex"><SampleTools /></div>
      </div>
      <div className="flex min-h-0 flex-1">
        <div className="flex w-[379px] shrink-0 flex-col border-l border-[#d0d0d0] pt-px">
          <div className="w-[377px]"><DockTitle title="Pipeline Browser" /></div>
          <div className="h-[180px] w-[377px] shrink-0 rounded-[2px] border-2 border-l border-[#9a9a9a] bg-white">
            <div className="ml-[49px] h-[3px] w-px bg-[#777]" />
            <div className="flex h-[20px] items-center pl-[45px] leading-none">
              <svg width="8" height="14" viewBox="0 0 8 14"><rect x=".5" y=".5" width="7" height="13" fill="#888" stroke="#222" /><path d="M2 3h4M2 5.500h4" stroke="#fff" /><path d="M4 9h2" stroke="#ddd" /></svg>
              <span className="ml-[7px]">builtin:</span>
            </div>
            <div className="ml-[49px] h-[3px] w-px bg-[#777]" />
            <div className="flex h-[18px] items-center pl-[4px]">
              <svg width="15" height="10" viewBox="0 0 15 10"><path d="M.5 5.500Q7-2.500 14.500 5.500 7 12 .5 5.500z" fill="#ddd" stroke="#333" /><circle cx="7.500" cy="5" r="3.500" fill="#25406e" /><circle cx="7.500" cy="4.500" r="1.300" fill="#000" /></svg>
              <div className="ml-[21px] flex h-[18px] w-[128px] shrink-0 items-center border border-dotted border-[#8f8468] bg-[#678db2] pl-[1px] leading-none text-white">
                <svg width="15" height="15" viewBox="0 0 15 15" className="shrink-0"><path d="M1 3l8-2 5 2v9l-8 2.500L1 12z" fill="#4d9438" /><path d="M1 3l5 2v9.500L1 12z" fill="#3c6e2c" /><path d="M1 3l8-2 5 2-8 2z" fill="#77b85e" /></svg>
                <span className="ml-[3px] whitespace-nowrap">laplace2d_fem.vtk</span>
              </div>
            </div>
          </div>
          <DotsH className="mt-[2px] ml-[124px] h-[4px] w-[122px] shrink-0" />
          <div className="flex h-[25px] w-[377px] shrink-0 items-end">
            <div className="h-[25px] w-[82px] rounded-t-[3px] border border-b-0 border-[#8b8b8b] pr-[2px] text-center leading-[25px]">Properties</div>
            <div className="h-[22px] w-[90px] rounded-tr-[2px] border border-l-0 border-[#8b8b8b] bg-linear-to-b from-[#dfe0e4] to-[#cbccd2] pl-[2px] text-center leading-[20px]">Information</div>
            <div className="h-px flex-1 bg-[#8b8b8b]" />
          </div>
          <div className="w-[377px]"><DockTitle title="Properties" /></div>
          <PropertiesPanel />
        </div>
        <DotsV className="mt-[222px] h-[220px]" />
        <div className="ml-px flex w-[339px] shrink-0 flex-col pt-[2px]">
          <LayoutTabs />
          <div className="flex h-[23px] shrink-0 items-center pl-[1px]">
            <Slot><CameraUndo /></Slot>
            <Slot><CameraUndo off /></Slot>
            <Sep />
            <div className="ml-px flex"><Slot><TwoD /></Slot><Slot><CameraLink /></Slot></div>
            <Sep />
            <div className="ml-px flex"><Slot><Pick op="plus" /></Slot></div>
            <span className="ml-[7px] w-[12px] text-[15px] leading-none font-medium">»</span>
            <span className="w-[89px] shrink-0 leading-[15px] font-bold"><span className="border-b border-black">RenderView1</span></span>
            <div className="flex gap-[2px]">
              <ViewBtn d="M1 1h9v9H1zM5.500 1v9" />
              <ViewBtn d="M1 1h9v9H1zM1 5.500h9" />
              <ViewBtn d="M1 1h9v9H1zM1 2h9" />
              <ViewBtn d="M4 4V1h6v5H7M1 4.500h6V10H1z" />
              <ViewBtn d="M1.500 1.500l8 8M9.500 1.500l-8 8" />
            </div>
          </div>
          <div className="ml-px h-[614px] w-[336px] shrink-0 border-2 border-[#0000ff]">
            <div className="h-[610px] w-[332px] border border-[#e8e8ff] bg-[#52576e]">
              <WaveScene />
            </div>
          </div>
          <div className="mt-px h-px shrink-0 bg-[#9a9a9a]" />
        </div>
      </div>
      <div className="-mt-[29px] mb-px ml-[349px] flex h-[28px] w-[375px] shrink-0 items-end">
        <div className="flex h-[28px] w-[352px] border border-[#8b8b8b] pr-[4px]">
          <div className="p-px"><StopBtn /></div>
          <div className="-ml-px flex-1 rounded-[2px] border-2 border-[#8b8b8b]" />
        </div>
        <svg width="12" height="12" viewBox="0 0 12 12" className="ml-auto" stroke="#555">
          <path d="M0 12L12 0M4 12l8-8M8 12l4-4" strokeWidth="1.300" />
        </svg>
      </div>
    </div>
  );
}

export default function App() {
  return (
    <div className="relative h-[722px] w-[1509px] overflow-hidden bg-[#eee]">
      <JavaWindow />
      <FileManager />
      <div className="absolute top-[53px] left-[961px] h-[669px] w-[600px] shadow-[0_0_16px_rgba(0,0,0,.35)]" />
      <ParaRight />
      <div className="absolute top-[-20px] left-[237px] h-[780px] w-[724px] shadow-[0_6px_22px_rgba(0,0,0,.6)]" />
      <ParaFront />
    </div>
  );
}
